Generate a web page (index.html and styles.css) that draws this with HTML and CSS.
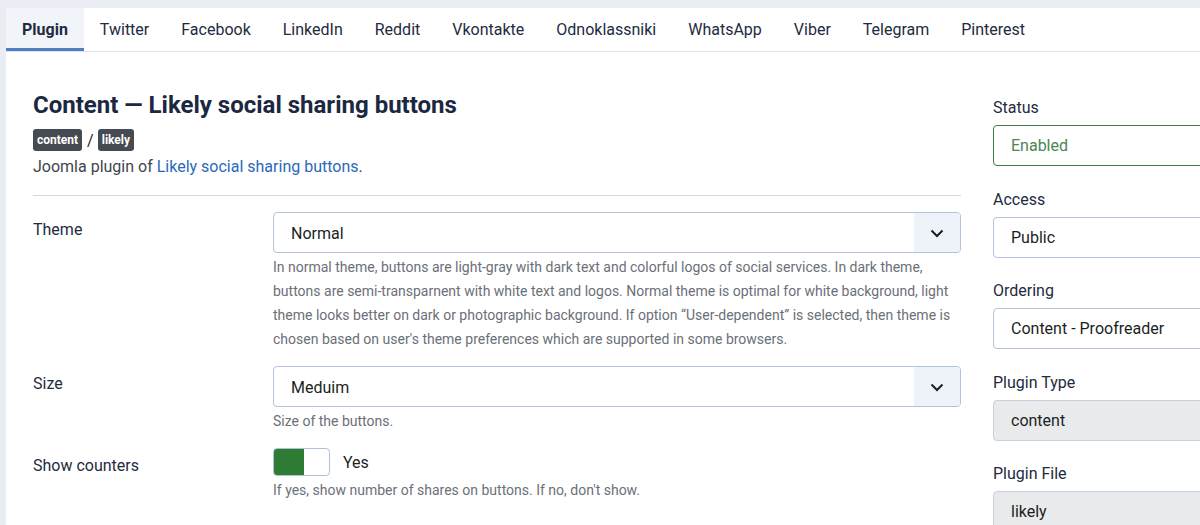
FILE: index.html
```html
<!DOCTYPE html>
<html lang="en">
<head>
<meta charset="utf-8">
<title>Plugin: Content — Likely social sharing buttons</title>
<link rel="stylesheet" href="styles.css">
</head>
<body>
<div class="page">
  <nav class="tabs">
    <a class="tab active">Plugin</a>
    <a class="tab">Twitter</a>
    <a class="tab">Facebook</a>
    <a class="tab">LinkedIn</a>
    <a class="tab">Reddit</a>
    <a class="tab">Vkontakte</a>
    <a class="tab">Odnoklassniki</a>
    <a class="tab">WhatsApp</a>
    <a class="tab">Viber</a>
    <a class="tab">Telegram</a>
    <a class="tab">Pinterest</a>
  </nav>
  <div class="content">
    <main class="main">
      <h1 class="title">Content — Likely social sharing buttons</h1>
      <div class="badges"><span class="badge">content</span><span class="sep">/</span><span class="badge">likely</span></div>
      <p class="desc">Joomla plugin of <a class="link">Likely social sharing buttons</a>.</p>
      <hr class="rule">
      <div class="row">
        <div class="label">Theme</div>
        <div class="control">
          <div class="select"><span class="value">Normal</span><span class="caret"><svg width="16" height="16" viewBox="0 0 16 16"><path d="M2.5 5.5 L8 11 L13.5 5.5" fill="none" stroke="#1b1f24" stroke-width="2"/></svg></span></div>
          <div class="help">In normal theme, buttons are light-gray with dark text and colorful logos of social services. In dark theme, buttons are semi-transparnent with white text and logos. Normal theme is optimal for white background, light theme looks better on dark or photographic background. If option “User-dependent” is selected, then theme is chosen based on user's theme preferences which are supported in some browsers.</div>
        </div>
      </div>
      <div class="row">
        <div class="label">Size</div>
        <div class="control">
          <div class="select"><span class="value">Meduim</span><span class="caret"><svg width="16" height="16" viewBox="0 0 16 16"><path d="M2.5 5.5 L8 11 L13.5 5.5" fill="none" stroke="#1b1f24" stroke-width="2"/></svg></span></div>
          <div class="help">Size of the buttons.</div>
        </div>
      </div>
      <div class="row">
        <div class="label">Show counters</div>
        <div class="control">
          <div class="switch-line"><span class="switch"><span class="switch-on"></span></span><span class="switch-text">Yes</span></div>
          <div class="help">If yes, show number of shares on buttons. If no, don't show.</div>
        </div>
      </div>
    </main>
    <aside class="side">
      <div class="field">
        <div class="field-label">Status</div>
        <div class="input status">Enabled</div>
      </div>
      <div class="field">
        <div class="field-label">Access</div>
        <div class="input">Public</div>
      </div>
      <div class="field">
        <div class="field-label">Ordering</div>
        <div class="input">Content - Proofreader</div>
      </div>
      <div class="field">
        <div class="field-label">Plugin Type</div>
        <div class="input readonly">content</div>
      </div>
      <div class="field">
        <div class="field-label">Plugin File</div>
        <div class="input readonly">likely</div>
      </div>
    </aside>
  </div>
</div>
</body>
</html>
```

FILE: styles.css
```css
html, body {
  margin: 0;
  padding: 0;
}
body {
  background: #eaeef4;
  font-family: Roboto, "Liberation Sans", sans-serif;
  color: #22262a;
  overflow: hidden;
  width: 1200px;
  height: 525px;
}
.page {
  margin: 8px 0 0 6px;
  background: #fff;
  width: 1400px;
  min-height: 600px;
}
.tabs {
  display: flex;
  border-bottom: 1px solid #dfe3e8;
}
.tab {
  display: block;
  padding: 10px 16px 6px;
  font-size: 16px;
  line-height: 24px;
  color: #1e2b40;
  border-bottom: 3px solid transparent;
}
.tab.active {
  background: #f1f5fa;
  border-bottom-color: #4b80c5;
  font-weight: 700;
}
.content {
  display: grid;
  grid-template-columns: 928px 320px;
  column-gap: 32px;
  padding: 39px 27px 0;
  align-items: start;
}
.title {
  margin: 0;
  font-size: 24px;
  line-height: 28px;
  font-weight: 700;
  color: #1c2841;
}
.badges {
  display: flex;
  align-items: center;
  margin-top: 10px;
  height: 22px;
}
.badge {
  background: #464b53;
  color: #fff;
  font-size: 12px;
  font-weight: 700;
  line-height: 14px;
  padding: 4px 4px;
  border-radius: 3px;
}
.sep {
  margin: 0 4px 0 5px;
  font-size: 16px;
  color: #22262a;
}
.desc {
  margin: 4px 0 0;
  font-size: 16px;
  line-height: 24px;
  color: #41464d;
}
.link {
  color: #2a69b8;
}
.rule {
  margin: 16px 0 16px;
  border: 0;
  border-top: 1px solid #d5d7da;
  height: 0;
}
.row {
  display: grid;
  grid-template-columns: 240px 1fr;
  margin-bottom: 15px;
}
.label {
  padding-top: 6px;
  font-size: 16px;
  line-height: 24px;
  color: #1e2b40;
}
.select {
  display: flex;
  height: 41px;
  box-sizing: border-box;
  border: 1px solid #b3c3da;
  border-radius: 4px;
  overflow: hidden;
}
.value {
  flex: 1;
  padding-left: 17px;
  font-size: 16px;
  line-height: 41px;
  color: #1b1f24;
}
.caret {
  width: 46px;
  background: #eef3f9;
  display: flex;
  align-items: center;
  justify-content: center;
}
.help {
  margin-top: 2px;
  font-size: 14px;
  line-height: 24px;
  color: #6b7078;
}
.switch-line {
  display: flex;
  align-items: center;
  height: 28px;
}
.switch {
  display: flex;
  width: 57px;
  height: 28px;
  box-sizing: border-box;
  border: 1px solid #b0c0d8;
  border-radius: 4px;
  overflow: hidden;
}
.switch-on {
  width: 30px;
  background: #2e7c33;
}
.switch-text {
  margin-left: 13px;
  font-size: 16px;
  color: #1b1f24;
}
.side {
  padding-top: 5px;
}
.field {
  margin-bottom: 21.5px;
}
.field-label {
  font-size: 16px;
  line-height: 24px;
  color: #1e2b40;
  margin-bottom: 5px;
}
.input {
  height: 41px;
  box-sizing: border-box;
  border: 1px solid #b3c3da;
  border-radius: 4px;
  padding-left: 17px;
  font-size: 16px;
  line-height: 39px;
  color: #1b1f24;
}
.input.status {
  border-color: #3a7d43;
  color: #4a8653;
}
.input.readonly {
  background: #e9eaec;
  border-color: #c6d1e0;
}
```
